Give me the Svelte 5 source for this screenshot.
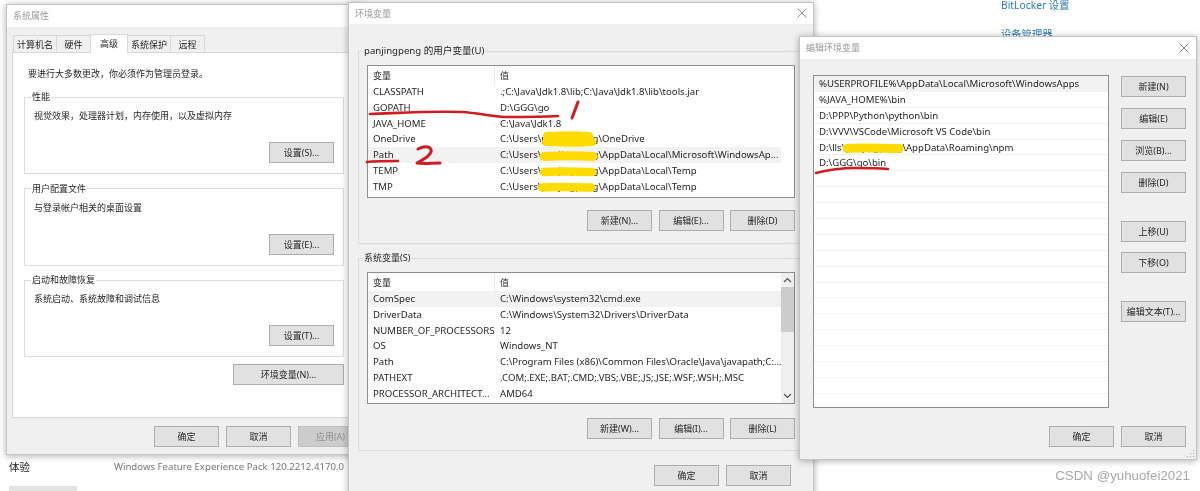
<script>
	const perfGroups = [
		{ legend: '性能', desc: '视觉效果，处理器计划，内存使用，以及虚拟内存', btn: '设置(S)...' },
		{ legend: '用户配置文件', desc: '与登录帐户相关的桌面设置', btn: '设置(E)...' },
		{ legend: '启动和故障恢复', desc: '系统启动、系统故障和调试信息', btn: '设置(T)...' }
	];
	const tabs = [
		{ label: '计算机名', w: 44 },
		{ label: '硬件', w: 35 },
		{ label: '高级', w: 38, active: true },
		{ label: '系统保护', w: 44 },
		{ label: '远程', w: 35 }
	];
	const userVars = [
		['CLASSPATH', '.;C:\\Java\\Jdk1.8\\lib;C:\\Java\\Jdk1.8\\lib\\tools.jar'],
		['GOPATH', 'D:\\GGG\\go'],
		['JAVA_HOME', 'C:\\Java\\Jdk1.8'],
		['OneDrive', 'C:\\Users\\panjingpeng\\OneDrive'],
		['Path', 'C:\\Users\\panjingpeng\\AppData\\Local\\Microsoft\\WindowsAp...', true],
		['TEMP', 'C:\\Users\\panjingpeng\\AppData\\Local\\Temp'],
		['TMP', 'C:\\Users\\panjingpeng\\AppData\\Local\\Temp']
	];
	const sysVars = [
		['ComSpec', 'C:\\Windows\\system32\\cmd.exe', true],
		['DriverData', 'C:\\Windows\\System32\\Drivers\\DriverData'],
		['NUMBER_OF_PROCESSORS', '12'],
		['OS', 'Windows_NT'],
		['Path', 'C:\\Program Files (x86)\\Common Files\\Oracle\\Java\\javapath;C:...'],
		['PATHEXT', '.COM;.EXE;.BAT;.CMD;.VBS;.VBE;.JS;.JSE;.WSF;.WSH;.MSC'],
		['PROCESSOR_ARCHITECT...', 'AMD64']
	];
	const pathEntries = [
		'%USERPROFILE%\\AppData\\Local\\Microsoft\\WindowsApps',
		'%JAVA_HOME%\\bin',
		'D:\\PPP\\Python\\python\\bin',
		'D:\\VVV\\VSCode\\Microsoft VS Code\\bin',
		'D:\\lls\\panjingpeng\\AppData\\Roaming\\npm',
		'D:\\GGG\\go\\bin'
	];
	const emptyRows = Array(15).fill('');
	const sideButtons = [
		{ label: '新建(N)' },
		{ label: '编辑(E)' },
		{ label: '浏览(B)...' },
		{ label: '删除(D)' },
		{ label: '上移(U)', cls: 'far' },
		{ label: '下移(O)', cls: 'near' },
		{ label: '编辑文本(T)...', cls: 'far' }
	];
</script>

{#snippet closeIcon()}
	<svg class="close" width="12" height="12" viewBox="0 0 12 12">
		<path d="M1.5 1.5l9 9M10.5 1.5l-9 9" stroke="#8a8a8a" stroke-width="1" fill="none" />
	</svg>
{/snippet}

{#snippet varRows(rows)}
	<div class="var-head">
		<span class="col-name">变量</span>
		<span class="col-value">值</span>
	</div>
	{#each rows as [name, value, hot]}
		<div class="var-row" class:hot>
			<span class="col-name">{name}</span>
			<span class="col-value">{value}</span>
		</div>
	{/each}
{/snippet}

<div class="stage">
	<a class="link bitlocker" href="#bitlocker">BitLocker 设置</a>
	<a class="link devices" href="#devices">设备管理器</a>

	<div class="info-row">
		<span class="info-title">体验</span>
		<span class="info-value">Windows Feature Experience Pack 120.2212.4170.0</span>
	</div>
	<div class="page-button"></div>
	<div class="watermark">CSDN @yuhuofei2021</div>

	<!-- 系统属性 -->
	<section class="window sys">
		<header class="title">系统属性</header>
		<div class="tabs">
			{#each tabs as tab}
				<span class="tab" class:active={tab.active} style="width: {tab.w}px">{tab.label}</span>
			{/each}
		</div>
		<div class="panel">
			<p class="notice">要进行大多数更改，你必须作为管理员登录。</p>
			{#each perfGroups as group}
				<fieldset class="perf">
					<legend>{group.legend}</legend>
					<p class="desc">{group.desc}</p>
					<div class="right"><button class="btn">{group.btn}</button></div>
				</fieldset>
			{/each}
			<div class="right env-line"><button class="btn wide">环境变量(N)...</button></div>
		</div>
		<footer class="sys-footer">
			<button class="btn">确定</button>
			<button class="btn">取消</button>
			<button class="btn off">应用(A)</button>
		</footer>
	</section>

	<!-- 环境变量 -->
	<section class="window env">
		<header class="title short">环境变量{@render closeIcon()}</header>
		<fieldset class="vars">
			<legend class="latin">panjingpeng 的用户变量(U)</legend>
			<div class="list user-list">
				<div class="rows">{@render varRows(userVars)}</div>
			</div>
			<div class="actions">
				<button class="btn">新建(N)...</button>
				<button class="btn">编辑(E)...</button>
				<button class="btn">删除(D)</button>
			</div>
		</fieldset>
		<fieldset class="vars second">
			<legend>系统变量(S)</legend>
			<div class="list sys-list">
				<div class="rows">{@render varRows(sysVars)}</div>
				<div class="scrollbar">
					<svg width="13" height="14" viewBox="0 0 13 14"><path d="M3 9l3.5-3.5L10 9" stroke="#555" stroke-width="1.2" fill="none" /></svg>
					<div class="thumb"></div>
					<svg class="down" width="13" height="14" viewBox="0 0 13 14"><path d="M3 5l3.5 3.5L10 5" stroke="#555" stroke-width="1.2" fill="none" /></svg>
				</div>
			</div>
			<div class="actions low">
				<button class="btn">新建(W)...</button>
				<button class="btn">编辑(I)...</button>
				<button class="btn">删除(L)</button>
			</div>
		</fieldset>
		<footer class="env-footer">
			<button class="btn">确定</button>
			<button class="btn">取消</button>
		</footer>
	</section>

	<!-- 编辑环境变量 -->
	<section class="window edit">
		<header class="title">编辑环境变量{@render closeIcon()}</header>
		<div class="edit-body">
			<div class="path-list">
				{#each pathEntries as entry, i}
					<div class="path-row" class:hot={i === 0}>{entry}</div>
				{/each}
				{#each emptyRows as _}
					<div class="path-row"></div>
				{/each}
			</div>
			<div class="side">
				{#each sideButtons as b}
					<button class="btn {b.cls ?? ''}">{b.label}</button>
				{/each}
			</div>
		</div>
		<footer class="edit-footer">
			<button class="btn">确定</button>
			<button class="btn">取消</button>
		</footer>
		<svg class="grip" width="8" height="8" viewBox="0 0 8 8" fill="#b5b5b5">
			<rect x="6" y="0" width="1.2" height="1.2" /><rect x="3" y="3" width="1.2" height="1.2" />
			<rect x="6" y="3" width="1.2" height="1.2" /><rect x="0" y="6" width="1.2" height="1.2" />
			<rect x="3" y="6" width="1.2" height="1.2" /><rect x="6" y="6" width="1.2" height="1.2" />
		</svg>
	</section>

	<!-- hand drawn marks on top of the screenshot -->
	<svg class="marks" width="1200" height="491" viewBox="0 0 1200 491" fill="none" stroke-linecap="round" stroke-linejoin="round">
		<g stroke="#ffdc00">
			<path d="M547 136c14 -1 32 -1 42 0M546 142c15 1 33 1 46 0" stroke-width="8" />
			<path d="M544 156.500c18 -1 34 -1 49 0" stroke-width="9" />
			<path d="M544 172c18 -1 34 0 48 0" stroke-width="8.500" />
			<path d="M542 187.500c18 -1 34 0 49 0" stroke-width="8.500" />
			<path d="M847 148.500c18 -1 34 0 52 0" stroke-width="9" />
		</g>
		<g stroke="#cf1b22">
			<path d="M370 114c30 -1 60 -3 92 -2c15 1 28 4 43 5c18 0 35 0 53 -1" stroke-width="2.600" />
			<path d="M578 102l-6 16" stroke-width="3" />
			<path d="M367 162c10 -1 20 -1 31 -1" stroke-width="2.600" />
			<path d="M418 149c4 -2 9 -3 12 -1c3 3 0 6 -3 9c-3 2 -6 4 -10 6c7 1 15 0 23 0" stroke-width="3" />
			<path d="M816 173c12 -3 26 -5 39 -5c11 0 22 0 33 1" stroke-width="2.600" />
		</g>
	</svg>
</div>

<style>
	:global(body) {
		margin: 0;
		background: #fff;
	}

	.stage {
		position: relative;
		width: 1200px;
		height: 491px;
		overflow: hidden;
		background: #fff;
		font-family: 'Noto Sans', 'Noto Sans CJK SC', sans-serif;
		font-size: 9px;
		line-height: 16px;
		color: #262626;
		filter: blur(0.3px);
	}

	p {
		margin: 0;
	}

	.link {
		position: absolute;
		left: 1001px;
		color: #2b7cb3;
		font-size: 10.3px;
		text-decoration: none;
	}
	.bitlocker {
		top: -3px;
	}
	.devices {
		top: 26px;
	}

	.info-row {
		position: absolute;
		left: 9px;
		top: 459px;
		width: 335px;
		display: flex;
		justify-content: space-between;
	}
	.info-title {
		font-size: 10.5px;
		color: #222;
	}
	.info-value {
		color: #777;
		font-size: 9.65px;
	}
	.page-button {
		position: absolute;
		left: 9px;
		top: 486px;
		width: 68px;
		height: 5px;
		background: #e3e3e3;
	}
	.watermark {
		position: absolute;
		right: 10px;
		top: 468px;
		color: #a8a8a8;
		font-family: 'Liberation Sans', sans-serif;
		font-size: 13.3px;
	}

	.window {
		position: absolute;
		box-sizing: border-box;
		background: #f0f0f0;
		border: 1px solid #c4c4c4;
		box-shadow: 0 1px 7px rgba(0, 0, 0, 0.32);
	}
	.sys {
		left: 6px;
		top: 4px;
		width: 360px;
		height: 451px;
	}
	.env {
		left: 348px;
		top: 2px;
		width: 466px;
		height: 500px;
	}
	.edit {
		left: 799px;
		top: 36px;
		width: 398px;
		height: 424px;
	}

	.title {
		position: relative;
		height: 22px;
		padding-left: 6px;
		background: #fff;
		line-height: 22px;
		color: #9a9a9a;
	}
	.title.short {
		height: 21px;
	}
	.close {
		position: absolute;
		right: 6px;
		top: 5px;
	}
	.env .close {
		right: 5px;
		top: 4px;
	}

	.tabs {
		display: flex;
		align-items: flex-end;
		height: 25px;
		padding-left: 7px;
	}
	.tab {
		box-sizing: border-box;
		height: 17px;
		margin-left: -1px;
		border: 1px solid #d9d9d9;
		border-bottom: 0;
		text-align: center;
		line-height: 17px;
	}
	.tab.active {
		position: relative;
		z-index: 1;
		height: 19px;
		margin-bottom: -1px;
		background: #fff;
	}

	.panel {
		box-sizing: border-box;
		height: 366px;
		margin-left: 5px;
		padding: 13px 0 0 11px;
		background: #fff;
		border: 1px solid #d9d9d9;
	}
	.notice {
		margin: 0 0 7px 4px;
	}

	fieldset {
		margin: 0;
		padding: 0;
		border: 1px solid #dcdcdc;
	}
	legend {
		margin-left: -4px;
		padding: 0 1px;
	}
	legend.latin {
		font-size: 9.6px;
	}

	.perf {
		box-sizing: border-box;
		width: 320px;
		height: 85px;
		margin-bottom: 6.5px;
		padding: 3px 9px 0;
	}
	.perf legend {
		margin-left: -3px;
	}
	.desc {
		margin-bottom: 18px;
	}
	.right {
		display: flex;
		justify-content: flex-end;
	}
	.env-line {
		width: 320px;
		margin-top: 6.500px;
	}

	.btn {
		box-sizing: border-box;
		width: 65px;
		height: 21px;
		padding: 0;
		background: #e1e1e1;
		border: 1px solid #adadad;
		border-radius: 0;
		font: inherit;
		line-height: 19px;
		color: #262626;
	}
	.btn.wide {
		width: 111px;
	}
	.btn.off {
		background: #cccccc;
		border-color: #bfbfbf;
		color: #8f8f8f;
	}

	.sys-footer {
		display: flex;
		gap: 7px;
		padding: 8px 0 0 147px;
	}

	.vars {
		box-sizing: border-box;
		width: 447px;
		height: 201px;
		margin: 19px 0 0 9px;
		padding: 6px 0 0 8px;
		background: transparent;
	}
	.vars.second {
		margin-top: 6px;
	}

	.list {
		box-sizing: border-box;
		display: flex;
		width: 428px;
		background: #fff;
		border: 1px solid #8e8e8e;
	}
	.user-list {
		height: 133px;
	}
	.sys-list {
		height: 132px;
	}
	.rows {
		width: 413px;
	}
	.var-head,
	.var-row {
		display: grid;
		grid-template-columns: 127px 1fr;
	}
	.var-head {
		height: 18px;
		line-height: 19px;
	}
	.var-head .col-name {
		border-right: 1px solid #e8e8e8;
	}
	.var-row {
		height: 15.8px;
		line-height: 16px;
		font-size: 9.6px;
	}
	.var-row.hot,
	.path-row.hot {
		background: #f2f2f2;
	}
	.col-name {
		padding-left: 5px;
		white-space: nowrap;
		overflow: hidden;
	}
	.col-value {
		padding-left: 5px;
		white-space: nowrap;
		overflow: hidden;
	}

	.scrollbar {
		display: flex;
		flex-direction: column;
		width: 13px;
		background: #f0f0f0;
	}
	.thumb {
		height: 45px;
		background: #cdcdcd;
	}
	.down {
		margin-top: auto;
	}

	.actions {
		display: flex;
		justify-content: flex-end;
		gap: 6.5px;
		width: 428px;
		margin-top: 12px;
	}
	.actions.low {
		margin-top: 14px;
	}

	.env-footer {
		display: flex;
		gap: 7px;
		margin: 14px 0 0 305px;
	}

	.edit-body {
		display: flex;
		gap: 12px;
		padding: 16px 0 0 13px;
	}
	.path-list {
		box-sizing: border-box;
		width: 296px;
		height: 333px;
		overflow: hidden;
		background: #fff;
		border: 1px solid #8e8e8e;
	}
	.path-row {
		box-sizing: border-box;
		height: 15.9px;
		padding-left: 5px;
		border-bottom: 1px solid #f2f2f2;
		font-size: 9.6px;
		line-height: 16px;
		white-space: nowrap;
	}
	.side {
		display: flex;
		flex-direction: column;
		gap: 11px;
		padding-top: 1px;
	}
	.side .far {
		margin-top: 17px;
	}
	.side .near {
		margin-top: -1px;
	}
	.edit-footer {
		display: flex;
		justify-content: flex-end;
		gap: 7px;
		margin-top: 18px;
		padding-right: 10px;
	}
	.grip {
		position: absolute;
		right: 1px;
		bottom: 1px;
	}

	.marks {
		position: absolute;
		left: 0;
		top: 0;
		pointer-events: none;
	}
</style>
